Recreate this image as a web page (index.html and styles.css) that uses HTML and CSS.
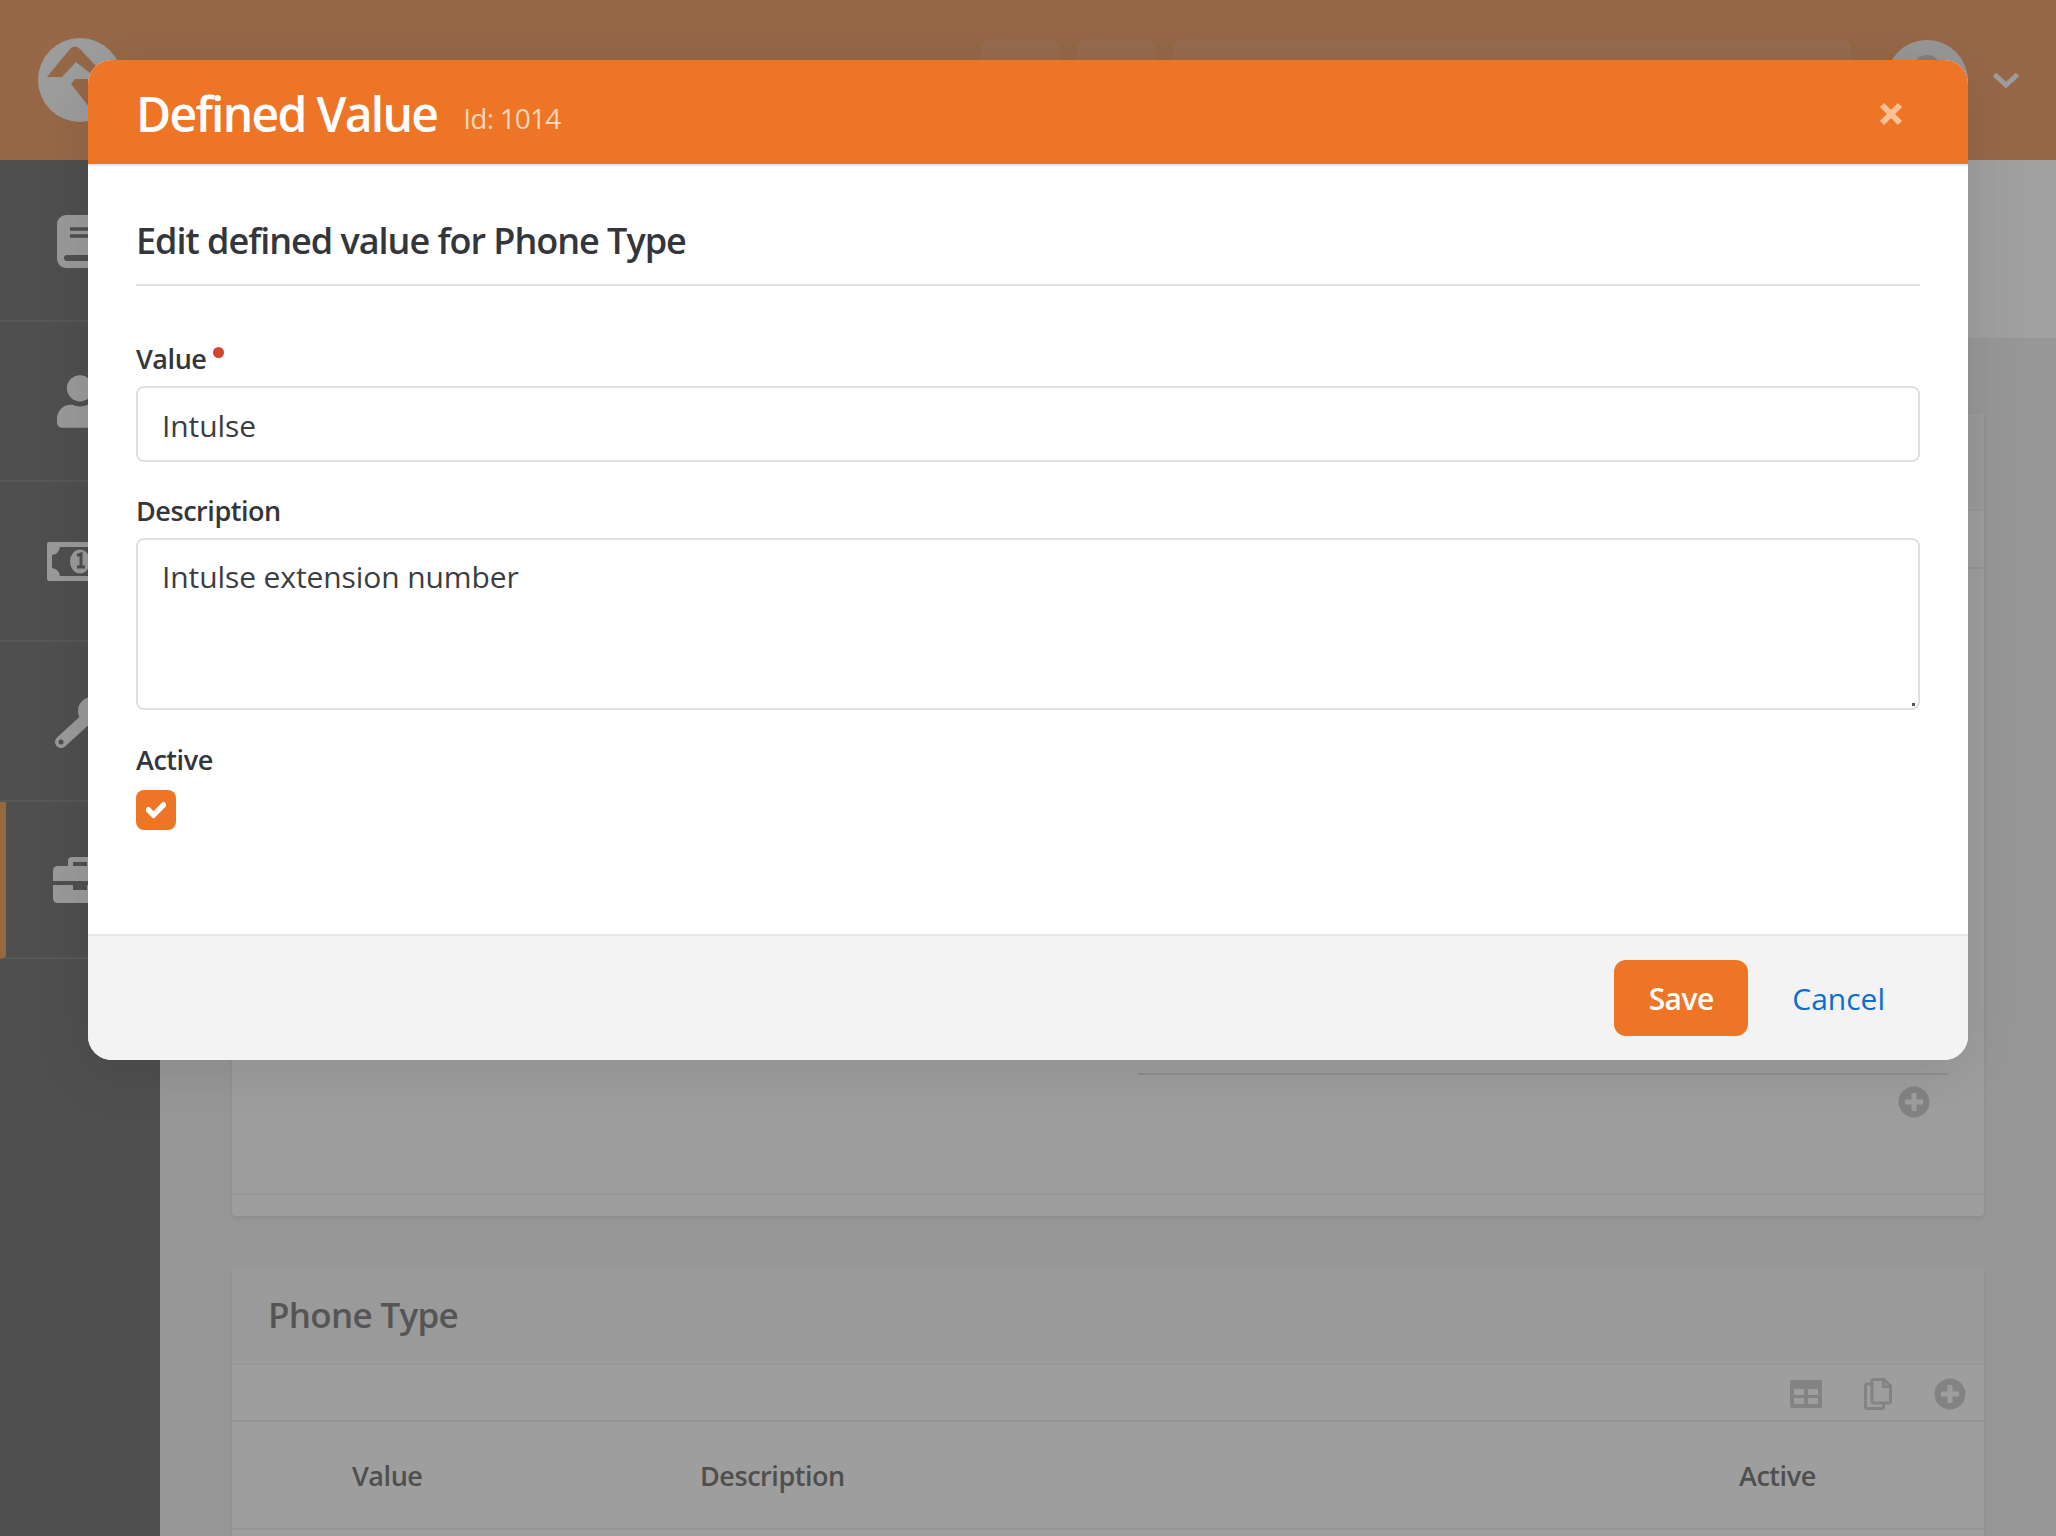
FILE: index.html
```html
<!DOCTYPE html>
<html lang="en">
<head>
    <meta charset="UTF-8">
    <meta name="viewport" content="width=device-width, initial-scale=1.0">
    <title>Defined Value</title>
    <link rel="stylesheet" href="styles.css">
</head>
<body>

    <!-- Top bar -->
    <header class="topbar">
        <svg class="logo" viewBox="0 0 84 84">
            <circle cx="42" cy="42" r="42" fill="#9d9d9d"/>
            <path d="M9 39L32 11Q37 6 42 11L68 39H57L38 24L24 39Z" fill="#966848"/>
            <path d="M33 46L37 41H66L60 70H52Z" fill="#966848"/>
        </svg>
        <div class="topbar-tools">
            <span class="tool-box"></span>
            <span class="tool-box"></span>
            <span class="tool-box tool-search"></span>
        </div>
        <svg class="avatar" viewBox="0 0 82 82">
            <circle cx="41" cy="41" r="41" fill="#979797"/>
            <circle cx="41" cy="29" r="14" fill="#7f7f7f"/>
        </svg>
        <svg class="chevron" viewBox="0 0 28 16">
            <path d="M2.500 2.500L14 13L25.500 2.500" fill="none" stroke="#9d9d9d" stroke-width="5"/>
        </svg>
    </header>

    <div class="layout">
        <!-- Sidebar -->
        <nav class="sidebar">
            <a class="nav-item">
                <svg class="nav-icon" width="46" height="53" viewBox="0 0 46 53">
                    <rect width="46" height="53" rx="9" fill="#9a9a9a"/>
                    <path d="M13 14H40M13 21H40" stroke="#4f4f4f" stroke-width="3.500"/>
                    <rect x="7" y="40" width="34" height="6" rx="3" fill="#4f4f4f"/>
                </svg>
            </a>
            <a class="nav-item">
                <svg class="nav-icon" width="46" height="53" viewBox="0 0 448 512">
                    <path d="M224 256c70.700 0 128-57.300 128-128S294.700 0 224 0 96 57.300 96 128s57.300 128 128 128zm89.600 32h-16.700c-22.200 10.200-46.900 16-72.900 16s-50.600-5.800-72.900-16h-16.700C60.200 288 0 348.200 0 422.400V464c0 26.500 21.500 48 48 48h352c26.500 0 48-21.500 48-48v-41.600c0-74.200-60.200-134.400-134.400-134.400z" fill="#9a9a9a"/>
                </svg>
            </a>
            <a class="nav-item">
                <svg class="nav-icon" width="66" height="39" viewBox="0 0 66 39">
                    <rect width="66" height="39" rx="2" fill="#9a9a9a"/>
                    <path d="M13 5H53Q54 12 61 13V26Q54 27 53 34H13Q12 27 5 26V13Q12 12 13 5Z" fill="#4f4f4f"/>
                    <ellipse cx="33" cy="19.500" rx="10" ry="12" fill="#9a9a9a"/>
                    <path d="M30 13.500L34 12V24M30 25H38" fill="none" stroke="#4f4f4f" stroke-width="3"/>
                </svg>
            </a>
            <a class="nav-item">
                <svg class="nav-icon nav-wrench" width="52" height="52" viewBox="0 0 52 52">
                    <path d="M7 45L30 24" stroke="#9a9a9a" stroke-width="12" stroke-linecap="round"/>
                    <circle cx="38" cy="14" r="14" fill="#9a9a9a"/>
                    <circle cx="7" cy="45" r="2.500" fill="#4f4f4f"/>
                </svg>
            </a>
            <a class="nav-item active">
                <svg class="nav-icon" width="54" height="46" viewBox="0 0 54 46">
                    <path d="M15 9V4Q15 0 19 0H35Q39 0 39 4V9H49Q54 9 54 14V24H0V14Q0 9 5 9ZM20 5V9H34V5Z" fill="#9a9a9a" fill-rule="evenodd"/>
                    <path d="M0 28H20V33H34V28H54V41Q54 46 49 46H5Q0 46 0 41Z" fill="#9a9a9a"/>
                </svg>
            </a>
        </nav>

        <!-- Page behind the dialog -->
        <main class="page">
            <div class="page-title"></div>
            <div class="page-content">
                <section class="panel">
                    <div class="panel-heading panel-heading-short"></div>
                    <div class="panel-actions panel-actions-short"></div>
                    <div class="panel-body">
                        <div class="inset-rule"></div>
                        <div class="inset-add">
                            <svg width="32" height="32" viewBox="0 0 512 512">
                                <path class="dim-icon" d="M256 8C119 8 8 119 8 256s111 248 248 248 248-111 248-248S393 8 256 8zm144 276c0 6.600-5.400 12-12 12h-92v92c0 6.600-5.400 12-12 12h-56c-6.600 0-12-5.400-12-12v-92h-92c-6.600 0-12-5.400-12-12v-56c0-6.600 5.400-12 12-12h92v-92c0-6.600 5.400-12 12-12h56c6.600 0 12 5.400 12 12v92h92c6.600 0 12 5.400 12 12v56z"/>
                            </svg>
                        </div>
                    </div>
                    <div class="panel-footer"></div>
                </section>

                <section class="panel">
                    <div class="panel-heading">
                        <h2>Phone Type</h2>
                    </div>
                    <div class="panel-actions">
                        <svg width="32" height="28" viewBox="0 0 32 28">
                            <path class="dim-icon" fill-rule="evenodd" d="M2 0H30Q32 0 32 2V26Q32 28 30 28H2Q0 28 0 26V2Q0 0 2 0ZM4 9V15H14V9ZM18 9V15H28V9ZM4 18V24H14V18ZM18 18V24H28V18Z"/>
                        </svg>
                        <svg width="28" height="32" viewBox="0 0 28 32">
                            <path d="M8 6H3Q1.500 6 1.500 8V29Q1.500 30.500 3 30.500H18Q19.500 30.500 19.500 29V25M9.500 1.500H20L26.500 8V23.500Q26.500 25 25 25H9.500Q8 25 8 23.500V3Q8 1.500 9.500 1.500ZM19.500 1.500V8.500H26.500" fill="none" stroke="#838383" stroke-width="3"/>
                        </svg>
                        <svg width="32" height="32" viewBox="0 0 512 512">
                            <path class="dim-icon" d="M256 8C119 8 8 119 8 256s111 248 248 248 248-111 248-248S393 8 256 8zm144 276c0 6.600-5.400 12-12 12h-92v92c0 6.600-5.400 12-12 12h-56c-6.600 0-12-5.400-12-12v-92h-92c-6.600 0-12-5.400-12-12v-56c0-6.600 5.400-12 12-12h92v-92c0-6.600 5.400-12 12-12h56c6.600 0 12 5.400 12 12v92h92c6.600 0 12 5.400 12 12v56z"/>
                        </svg>
                    </div>
                    <div class="table-head">
                        <span>Value</span>
                        <span>Description</span>
                        <span>Active</span>
                    </div>
                    <div class="table-row"></div>
                </section>
            </div>
        </main>
    </div>

    <!-- Dialog -->
    <div class="modal">
        <div class="modal-header">
            <h1>Defined Value</h1>
            <span class="modal-id">Id: 1014</span>
            <svg class="modal-close" width="24" height="24" viewBox="0 0 24 24">
                <path d="M3 3L21 21M21 3L3 21" stroke="#fbc195" stroke-width="6"/>
            </svg>
        </div>
        <div class="modal-body">
            <h3 class="legend">Edit defined value for Phone Type</h3>
            <div class="form-group">
                <label class="field-label">Value<span class="required-dot"></span></label>
                <input class="form-control" type="text" value="Intulse">
            </div>
            <div class="form-group form-group-wide">
                <label class="field-label">Description</label>
                <div class="textarea-wrap">
                    <textarea class="form-control form-textarea">Intulse extension number</textarea>
                </div>
            </div>
            <div class="form-group">
                <label class="field-label">Active</label>
                <span class="checkbox">
                    <svg width="20" height="20" viewBox="0 0 512 512">
                        <path fill="#fff" stroke="#fff" stroke-width="36" d="M173.898 439.404l-166.400-166.400c-9.997-9.997-9.997-26.206 0-36.204l36.203-36.204c9.997-9.998 26.207-9.998 36.204 0L192 312.690 432.095 72.596c9.997-9.997 26.207-9.997 36.204 0l36.203 36.204c9.997 9.997 9.997 26.206 0 36.204l-294.400 294.401c-9.998 9.997-26.207 9.997-36.204-.001z"/>
                    </svg>
                </span>
            </div>
        </div>
        <div class="modal-footer">
            <button class="btn-save">Save</button>
            <a class="btn-link">Cancel</a>
        </div>
    </div>

</body>
</html>
```

FILE: styles.css
```css
* {
    box-sizing: border-box;
}
body {
    margin: 0;
    width: 2056px;
    height: 1536px;
    overflow: hidden;
    font-family: "Open Sans", "Noto Sans", sans-serif;
    background-color: #979797;
    color: #33363b;
}

/* Top bar */
.topbar {
    height: 160px;
    background-color: #966848;
    display: flex;
    align-items: flex-start;
    padding: 38px 36px 0 38px;
}
.logo {
    width: 84px;
    height: 84px;
}
.topbar-tools {
    display: flex;
    gap: 17px;
    margin-left: 859px;
    padding-top: 2px;
}
.tool-box {
    width: 79px;
    height: 76px;
    border-radius: 8px;
    background-color: #976c50;
}
.tool-search {
    width: 678px;
}
.avatar {
    width: 82px;
    height: 82px;
    margin: 2px 0 0 35px;
}
.chevron {
    width: 28px;
    height: 16px;
    margin: 34px 0 0 24px;
}

/* Sidebar */
.layout {
    display: flex;
    height: 1376px;
}
.sidebar {
    width: 160px;
    padding-top: 2px;
    background-color: #4f4f4f;
    flex-shrink: 0;
}
.nav-item {
    display: flex;
    align-items: center;
    justify-content: center;
    height: 160px;
    border-bottom: 2px solid #585858;
}
.nav-item.active {
    height: 157px;
    border-left: 6px solid #96683f;
    padding-right: 6px;
}
.nav-wrench {
    margin-top: 4px;
}

/* Page behind the dialog */
.page {
    flex: 1;
}
.page-title {
    height: 178px;
    background-color: #a0a0a0;
}
.page-content {
    padding: 76px 72px 0;
    display: flex;
    flex-direction: column;
    gap: 51px;
}
.panel {
    background-color: #9e9e9e;
    border-radius: 4px;
    box-shadow: 0 2px 4px rgba(0, 0, 0, 0.08);
}
.panel-heading {
    height: 98px;
    padding: 0 0 2px 36px;
    display: flex;
    align-items: center;
    background-color: #9a9a9a;
    border-bottom: 2px solid #989898;
}
.panel-heading h2 {
    margin: 0;
    font-size: 35px;
    font-weight: 600;
    letter-spacing: -0.7px;
    color: #555;
}
.panel-heading-short {
    height: 97px;
}
.panel-actions {
    height: 57px;
    display: flex;
    align-items: center;
    justify-content: flex-end;
    gap: 42px;
    padding: 2px 18px 0 0;
    border-bottom: 2px solid #959595;
}
.panel-actions-short {
    height: 58px;
}
.panel-body {
    height: 626px;
    padding: 504px 36px 0 906px;
    border-bottom: 2px solid #979797;
}
.inset-rule {
    border-top: 2px solid #8e8e8e;
}
.inset-add {
    display: flex;
    justify-content: flex-end;
    margin-top: 11px;
    padding-right: 18px;
}
.panel-footer {
    height: 21px;
}
.dim-icon {
    fill: #838383;
}
.table-head {
    height: 108px;
    display: grid;
    grid-template-columns: 348px 1039px auto;
    align-items: center;
    padding-left: 120px;
    border-bottom: 2px solid #959595;
    font-size: 27px;
    font-weight: 600;
    letter-spacing: -0.45px;
    color: #4f4f4f;
}
.table-row {
    height: 60px;
}

/* Dialog */
.modal {
    position: absolute;
    left: 88px;
    top: 60px;
    width: 1880px;
    height: 1000px;
    background-color: #fff;
    border-radius: 24px;
    overflow: hidden;
    display: flex;
    flex-direction: column;
    box-shadow: 0 10px 60px rgba(0, 0, 0, 0.1);
}
.modal-header {
    height: 106px;
    flex-shrink: 0;
    display: flex;
    align-items: center;
    padding: 0 48px;
    background-color: #ed7525;
    border-bottom: 2px solid #e6e6e6;
    color: #fff;
}
.modal-header h1 {
    margin: 2px 0 0;
    font-size: 48px;
    font-weight: 600;
    letter-spacing: -1.7px;
}
.modal-id {
    margin: 12px 0 0 26px;
    font-size: 28px;
    letter-spacing: -0.8px;
    color: #fad6bb;
}
.modal-close {
    margin-left: auto;
    margin-right: 17px;
    margin-top: 4px;
}
.modal-body {
    flex: 1;
    padding: 48px 48px 0;
}
.legend {
    margin: 0 0 53px;
    padding-bottom: 16px;
    border-bottom: 2px solid #dfe0e0;
    font-size: 36px;
    font-weight: 600;
    line-height: 54px;
    letter-spacing: -1.02px;
}
.form-group {
    margin-bottom: 29px;
}
.form-group-wide {
    margin-bottom: 30px;
}
.field-label {
    display: block;
    height: 40px;
    margin-bottom: 7px;
    font-size: 27px;
    font-weight: 600;
    line-height: 40px;
    letter-spacing: -0.45px;
}
.required-dot {
    display: inline-block;
    width: 11px;
    height: 11px;
    margin-left: 7px;
    border-radius: 50%;
    background-color: #d4442e;
    vertical-align: 11px;
}
.form-control {
    display: block;
    width: 100%;
    height: 76px;
    padding: 2px 24px 0;
    border: 2px solid #e0e0e0;
    border-radius: 8px;
    font-family: inherit;
    font-size: 30px;
    color: #3a3d42;
    background-color: #fff;
    letter-spacing: -0.1px;
}
.textarea-wrap {
    position: relative;
}
/* tiny resize mark in the corner */
.textarea-wrap::after {
    content: "";
    position: absolute;
    right: 5px;
    bottom: 4px;
    width: 3px;
    height: 3px;
    background-color: #555;
}
.form-textarea {
    height: 172px;
    padding: 16px 24px 12px;
    line-height: 1.4;
    resize: none;
}
.checkbox {
    display: flex;
    align-items: center;
    justify-content: center;
    width: 40px;
    height: 40px;
    margin-top: 10px;
    border-radius: 8px;
    background-color: #ed7525;
}
.modal-footer {
    height: 126px;
    flex-shrink: 0;
    display: flex;
    align-items: center;
    justify-content: flex-end;
    padding: 0 48px;
    background-color: #f3f3f3;
    border-top: 2px solid #e6e6e6;
}
.btn-save {
    width: 134px;
    height: 76px;
    margin-right: 9px;
    border: none;
    border-radius: 12px;
    background-color: #ed7525;
    color: #fff;
    font-family: inherit;
    font-size: 30px;
    font-weight: 600;
    letter-spacing: -0.5px;
}
.btn-link {
    padding: 0 35px;
    font-size: 30px;
    color: #0a6ecf;
}
```
